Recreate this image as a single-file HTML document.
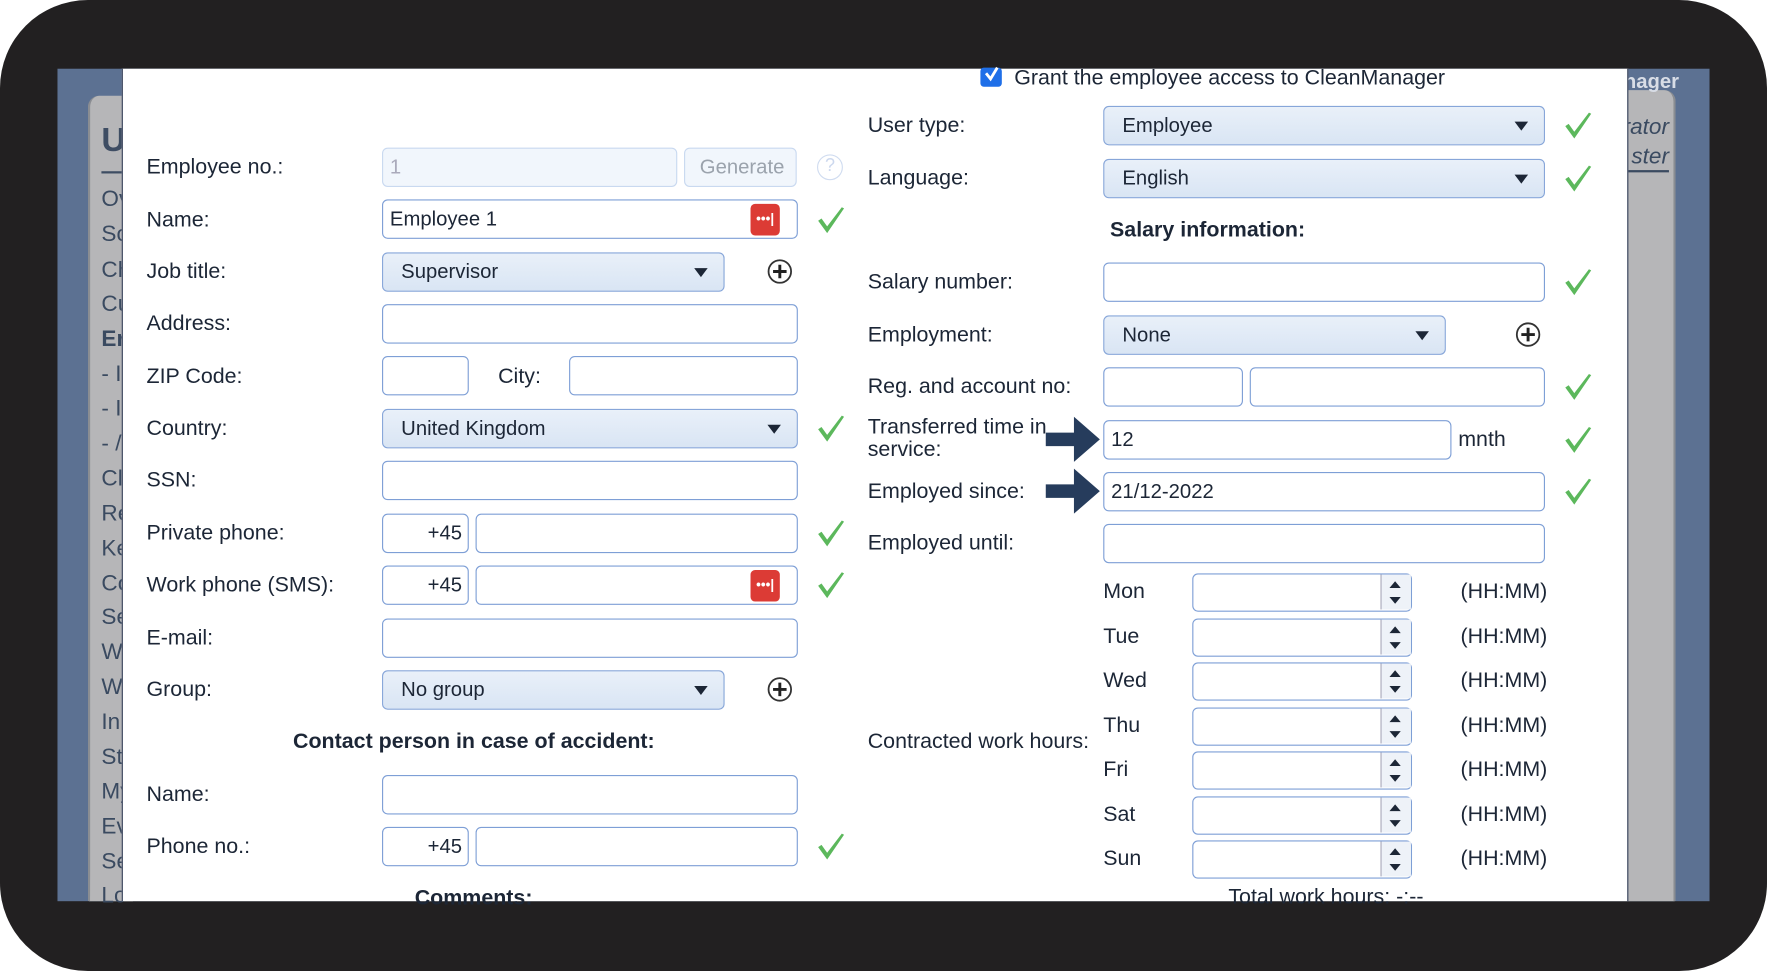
<!DOCTYPE html>
<html><head><meta charset="utf-8"><style>
*{margin:0;padding:0;box-sizing:border-box}
html,body{width:1767px;height:971px;overflow:hidden;background:#fff}
#w{position:absolute;left:0;top:0;width:1568px;height:862px;transform-origin:0 0;transform:scale(1.12691,1.1265);font-family:"Liberation Sans",sans-serif;color:#1c2636}
.a{position:absolute}
.frame{left:0;top:0;width:1568px;height:862px;background:#222021;border-radius:78px}
.t{position:absolute;font-size:19px;line-height:22px;white-space:nowrap}
.in{position:absolute;height:35px;border:1.5px solid #7e9fd6;border-radius:5px;background:#fff;font-size:18px;line-height:32px;padding-left:6px}
.sel{position:absolute;height:35px;border:1.5px solid #87a6d9;border-radius:5px;background:linear-gradient(#e9f0f9,#d9e5f4);font-size:18px;line-height:32px;padding-left:16px}
.sel:after{content:"";position:absolute;right:14px;top:13px;border-left:6px solid transparent;border-right:6px solid transparent;border-top:8px solid #1c2636}
.ck{position:absolute;width:26px;height:26px}
.pl{position:absolute;width:24px;height:24px}
.dots{position:absolute;width:26px;height:28px;background:#dc3b35;border-radius:4px;color:#fff;font-size:12px;line-height:26px;text-align:center;font-weight:bold}
.sp{position:absolute;width:195px;height:34px;border:1.5px solid #7e9fd6;border-radius:5px;background:#fff}
.sp:after{content:"";position:absolute;right:0;top:0;width:26px;height:31px;border-left:1px solid #aab;background:#eef2f8}
.menu{position:absolute;left:90px;font-size:20px;color:#3a4a60}
.rm{position:absolute;right:0;white-space:nowrap}
</style></head><body><div id="w">
<div class="a frame"></div>
<div class="a" style="left:51px;top:61px;width:1466px;height:739px;background:#5c7192"></div>
<div class="a" style="left:78px;top:85px;width:40px;height:715px;background:#b6b6b8;border-radius:10px 0 0 0;border-left:2px solid #8a8d92"></div>
<div class="menu" style="top:108px;font-size:30px;font-weight:bold;color:#3e4d63">U</div>
<div class="a" style="left:90px;top:152px;width:20px;height:2px;background:#3e4d63"></div>
<div class="menu" style="top:166px">Ov</div><div class="menu" style="top:197px">So</div><div class="menu" style="top:229px">Ch</div><div class="menu" style="top:259px">Cu</div><div class="menu" style="top:290px;font-weight:bold">Er</div><div class="menu" style="top:321px">- I</div><div class="menu" style="top:352px">- I</div><div class="menu" style="top:383px">- /</div><div class="menu" style="top:414px">Cl</div><div class="menu" style="top:445px">Re</div><div class="menu" style="top:476px">Ke</div><div class="menu" style="top:507px">Co</div><div class="menu" style="top:537px">Se</div><div class="menu" style="top:568px">W</div><div class="menu" style="top:599px">W</div><div class="menu" style="top:630px">In</div><div class="menu" style="top:661px">St</div><div class="menu" style="top:692px">My</div><div class="menu" style="top:723px">Ev</div><div class="menu" style="top:754px">Se</div><div class="menu" style="top:784px">Lo</div>
<div class="a" style="left:1445px;top:80px;width:42px;height:720px;background:#b6b6b8;border-radius:0 10px 0 0;border-right:2px solid #8a8d92"></div>
<div class="a" style="left:1445px;top:61px;width:50px;height:100px;overflow:hidden">
<div class="rm" style="top:1px;right:5px;color:#d8dde6;font-weight:bold;font-size:18px">nager</div>
<div class="rm" style="top:41px;right:14px;font-style:italic;color:#3a4a60;font-size:20px">rator</div>
<div class="rm" style="top:67px;right:14px;font-style:italic;color:#3a4a60;font-size:20px">ster</div>
<div class="a" style="left:0;top:90px;width:36px;height:1.5px;background:#3a4a60"></div>
</div>
<div class="a" style="left:108px;top:61px;width:1337px;height:739px;background:#fff;border-left:1.5px solid #2b3650;border-right:1.5px solid #2b3650"></div>
<div class="a" style="left:0;top:0">
<div class="t" style="left:130px;top:138px">Employee no.:</div>
<div class="in" style="left:339px;top:131px;width:262px;background:#f1f6fc;border-color:#c9d9f0;color:#aab">1</div>
<div class="in" style="left:607px;top:131px;width:100px;background:#f1f6fc;border-color:#c9d9f0;color:#9ba3ad;padding-left:13px">Generate</div>
<div class="a" style="left:725px;top:137px;width:23px;height:23px;border:1.5px solid #d0dcf0;border-radius:50%;color:#ccd8ee;font-size:16px;text-align:center;line-height:20px">?</div>
<div class="t" style="left:130px;top:185px">Name:</div>
<div class="in" style="left:339px;top:177px;width:369px">Employee 1</div>
<div class="dots" style="left:666px;top:181px">•••|</div>
<div class="t" style="left:130px;top:231px">Job title:</div>
<div class="sel" style="left:339px;top:224px;width:304px">Supervisor</div>
<div class="t" style="left:130px;top:277px">Address:</div>
<div class="in" style="left:339px;top:270px;width:369px"></div>
<div class="t" style="left:130px;top:324px">ZIP Code:</div>
<div class="in" style="left:339px;top:316px;width:77px"></div>
<div class="t" style="left:442px;top:324px">City:</div>
<div class="in" style="left:505px;top:316px;width:203px"></div>
<div class="t" style="left:130px;top:370px">Country:</div>
<div class="sel" style="left:339px;top:363px;width:369px">United Kingdom</div>
<div class="t" style="left:130px;top:416px">SSN:</div>
<div class="in" style="left:339px;top:409px;width:369px"></div>
<div class="t" style="left:130px;top:463px">Private phone:</div>
<div class="in" style="left:339px;top:456px;width:77px;text-align:right;padding-right:5px">+45</div>
<div class="in" style="left:422px;top:456px;width:286px"></div>
<div class="t" style="left:130px;top:509px">Work phone (SMS):</div>
<div class="in" style="left:339px;top:502px;width:77px;text-align:right;padding-right:5px">+45</div>
<div class="in" style="left:422px;top:502px;width:286px"></div>
<div class="dots" style="left:666px;top:506px">•••|</div>
<div class="t" style="left:130px;top:556px">E-mail:</div>
<div class="in" style="left:339px;top:549px;width:369px"></div>
<div class="t" style="left:130px;top:602px">Group:</div>
<div class="sel" style="left:339px;top:595px;width:304px">No group</div>
<div class="t" style="left:260px;top:648px;font-weight:bold">Contact person in case of accident:</div>
<div class="t" style="left:130px;top:695px">Name:</div>
<div class="in" style="left:339px;top:688px;width:369px"></div>
<div class="t" style="left:130px;top:741px">Phone no.:</div>
<div class="in" style="left:339px;top:734px;width:77px;text-align:right;padding-right:5px">+45</div>
<div class="in" style="left:422px;top:734px;width:286px"></div>
<div class="t" style="left:368px;top:787px;font-weight:bold">Comments:</div>
<div class="a" style="left:870px;top:60px;width:19px;height:17px;background:#1f6fe8;border-radius:3px"></div>
<svg class="a" style="left:872px;top:58px" width="16" height="16"><path d="M3 7 L7 12 L13 2" stroke="#fff" stroke-width="2.5" fill="none"/></svg>
<div class="t" style="left:900px;top:59px">Grant the employee access to CleanManager</div>
<div class="t" style="left:770px;top:101px">User type:</div>
<div class="sel" style="left:979px;top:94px;width:392px">Employee</div>
<div class="t" style="left:770px;top:148px">Language:</div>
<div class="sel" style="left:979px;top:141px;width:392px">English</div>
<div class="t" style="left:985px;top:194px;font-weight:bold">Salary information:</div>
<div class="t" style="left:770px;top:240px">Salary number:</div>
<div class="in" style="left:979px;top:233px;width:392px"></div>
<div class="t" style="left:770px;top:287px">Employment:</div>
<div class="sel" style="left:979px;top:280px;width:304px">None</div>
<div class="t" style="left:770px;top:333px">Reg. and account no:</div>
<div class="in" style="left:979px;top:326px;width:124px"></div>
<div class="in" style="left:1109px;top:326px;width:262px"></div>
<div class="t" style="left:770px;top:370px;line-height:20px">Transferred time in<br>service:</div>
<div class="in" style="left:979px;top:373px;width:309px">12</div>
<div class="t" style="left:1294px;top:380px">mnth</div>
<div class="t" style="left:770px;top:426px">Employed since:</div>
<div class="in" style="left:979px;top:419px;width:392px">21/12-2022</div>
<div class="t" style="left:770px;top:472px">Employed until:</div>
<div class="in" style="left:979px;top:465px;width:392px"></div>
<div class="t" style="left:770px;top:648px">Contracted work hours:</div>
<svg class="a" style="left:926px;top:368px" width="52" height="90"><path d="M2 16 H27 V2 L50 22 L27 42 V28 H2Z M2 62 H27 V48 L50 68 L27 88 V74 H2Z" fill="#263c5c"/></svg>
<div class="t" style="left:1090px;top:786px">Total work hours: -:--</div>
</div>
<div id="days"></div>
<div id="icons"></div>
<script>
var d=["Mon","Tue","Wed","Thu","Fri","Sat","Sun"],h="";
for(var i=0;i<7;i++){var y=526+i*39.5;h+='<div class="t" style="left:979px;top:'+(y-11)+'px">'+d[i]+'</div><div class="sp" style="left:1058px;top:'+(y-17)+'px"></div><svg class="a" style="left:1231px;top:'+(y-12)+'px" width="14" height="24"><path d="M2 8 L7 2 L12 8Z M2 16 L7 22 L12 16Z" fill="#1c2636"/></svg><div class="t" style="left:1296px;top:'+(y-11)+'px">(HH:MM)</div>';}
document.getElementById("days").innerHTML=h;
var c=[[737,195],[737,380],[737,473],[737,519],[737,751],[1400,111],[1400,158],[1400,250],[1400,343],[1400,390],[1400,436]],g="";
c.forEach(function(p){g+='<svg class="ck" style="left:'+(p[0]-13)+'px;top:'+(p[1]-13)+'px" viewBox="0 0 26 26"><path d="M2 14 L5 12 L10 19 L23 2 L25 3 L10 25Z" fill="#5cb85c"/></svg>';});
[[692,241],[692,612],[1356,297]].forEach(function(p){g+='<svg class="pl" style="left:'+(p[0]-12)+'px;top:'+(p[1]-12)+'px" viewBox="0 0 24 24"><circle cx="12" cy="12" r="10" fill="none" stroke="#333" stroke-width="1.6"/><path d="M12 6V18M6 12H18" stroke="#222" stroke-width="2.6"/></svg>';});
document.getElementById("icons").innerHTML=g;
</script>
</div></body></html>
